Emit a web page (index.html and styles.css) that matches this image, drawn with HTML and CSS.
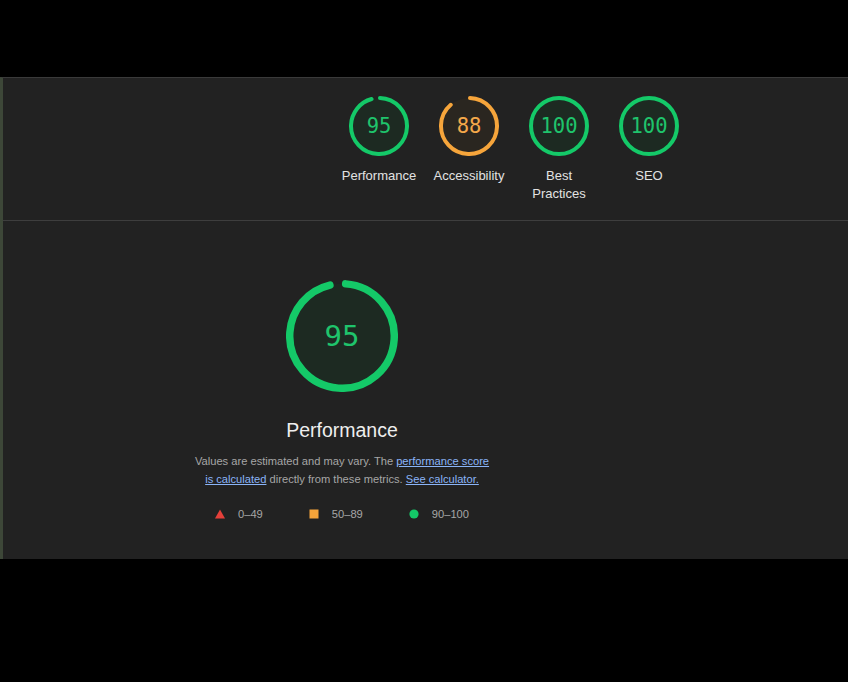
FILE: index.html
```html
<!DOCTYPE html>
<html lang="en">
<head>
<meta charset="utf-8">
<title>Lighthouse report</title>
<link rel="stylesheet" href="styles.css">
</head>
<body>
<div class="topbar"></div>
<main class="panel">
  <section class="summary">
    <div class="gauge-item">
      <svg class="gauge gauge-sm pass" viewBox="0 0 120 120">
        <circle class="g-base" cx="60" cy="60" r="56"></circle>
        <circle class="g-arc" cx="60" cy="60" r="56" stroke-dasharray="334.27 351.86" transform="rotate(-88 60 60)"></circle>
        <text class="g-num" x="60" y="60">95</text>
      </svg>
      <div class="gauge-label">Performance</div>
    </div>
    <div class="gauge-item">
      <svg class="gauge gauge-sm avg" viewBox="0 0 120 120">
        <circle class="g-base" cx="60" cy="60" r="56"></circle>
        <circle class="g-arc" cx="60" cy="60" r="56" stroke-dasharray="309.64 351.86" transform="rotate(-88 60 60)"></circle>
        <text class="g-num" x="60" y="60">88</text>
      </svg>
      <div class="gauge-label">Accessibility</div>
    </div>
    <div class="gauge-item">
      <svg class="gauge gauge-sm pass" viewBox="0 0 120 120">
        <circle class="g-base" cx="60" cy="60" r="56"></circle>
        <circle class="g-arc" cx="60" cy="60" r="56"></circle>
        <text class="g-num" x="60" y="60">100</text>
      </svg>
      <div class="gauge-label">Best<br>Practices</div>
    </div>
    <div class="gauge-item">
      <svg class="gauge gauge-sm pass" viewBox="0 0 120 120">
        <circle class="g-base" cx="60" cy="60" r="56"></circle>
        <circle class="g-arc" cx="60" cy="60" r="56"></circle>
        <text class="g-num" x="60" y="60">100</text>
      </svg>
      <div class="gauge-label">SEO</div>
    </div>
  </section>
  <section class="detail">
    <div class="detail-col">
      <svg class="gauge gauge-lg pass" viewBox="0 0 120 120">
        <circle class="g-base" cx="60" cy="60" r="56"></circle>
        <circle class="g-arc" cx="60" cy="60" r="56" stroke-dasharray="334.27 351.86" transform="rotate(-86 60 60)"></circle>
        <text class="g-num" x="60" y="60">95</text>
      </svg>
      <h2 class="title">Performance</h2>
      <p class="desc">Values are estimated and may vary. The <a href="#">performance score</a><br><a href="#">is calculated</a> directly from these metrics. <a href="#">See calculator.</a></p>
      <div class="legend">
        <span class="legend-item"><svg class="shape" viewBox="0 0 10 10"><polygon points="5,0.5 10,9.5 0,9.5" fill="#e5403a"/></svg>0–49</span>
        <span class="legend-item"><svg class="shape" viewBox="0 0 10 10"><rect x="0.5" y="0.5" width="9" height="9" fill="#f5a43a"/></svg>50–89</span>
        <span class="legend-item"><svg class="shape" viewBox="0 0 10 10"><circle cx="5" cy="5" r="4.6" fill="#14c968"/></svg>90–100</span>
      </div>
    </div>
  </section>
</main>
<div class="bottom"></div>
</body>
</html>
```
FILE: styles.css
```css
html, body {
  margin: 0;
  padding: 0;
  background: #000;
  font-family: "Liberation Sans", Arial, sans-serif;
}
.topbar {
  height: 77px;
  background: #000;
}
.panel {
  background: #222222;
  border-top: 1px solid #3a3a3a;
  border-left: 3px solid #3d4738;
  height: 482px;
  box-sizing: border-box;
}
.summary {
  display: flex;
  padding: 18px 0 0 331px;
  height: 143px;
  box-sizing: border-box;
  border-bottom: 1px solid #3e3e3e;
}
.gauge-item {
  width: 90px;
  display: flex;
  flex-direction: column;
  align-items: center;
}
.gauge {
  display: block;
}
.gauge-sm {
  width: 60px;
  height: 60px;
}
.gauge-lg {
  width: 112px;
  height: 112px;
}
.g-base {
  stroke: none;
}
.g-arc {
  fill: none;
  stroke-width: 8;
  stroke-linecap: round;
}
.g-num {
  font-family: "DejaVu Sans Mono", "Liberation Mono", monospace;
  font-size: 41px;
  text-anchor: middle;
  dominant-baseline: central;
}
.gauge-lg .g-num {
  font-size: 31px;
}
.pass .g-base { fill: #1d2a22; }
.pass .g-arc { stroke: #14c968; }
.pass .g-num { fill: #1fc46c; }
.avg .g-base { fill: #2a2620; }
.avg .g-arc { stroke: #f6a53b; }
.avg .g-num { fill: #f4a84a; }
.gauge-label {
  margin-top: 11px;
  font-size: 13px;
  line-height: 18px;
  color: #e2e2e2;
  text-align: center;
}
.detail {
  padding-top: 59px;
}
.detail-col {
  width: 310px;
  margin-left: 184px;
  display: flex;
  flex-direction: column;
  align-items: center;
  text-align: center;
}
.title {
  margin: 26px 0 0;
  font-size: 19.5px;
  font-weight: normal;
  line-height: 24px;
  color: #eeeeee;
}
.desc {
  width: 298px;
  margin: 10px 0 0;
  font-size: 11.15px;
  line-height: 18px;
  color: #a6a6a6;
}
.desc a {
  color: #8ab4f8;
  text-decoration: underline;
}
.legend {
  display: flex;
  gap: 46px;
  margin-top: 18px;
  font-size: 11.15px;
  line-height: 16px;
  color: #a6a6a6;
}
.legend-item {
  display: flex;
  align-items: center;
  gap: 13px;
}
.shape {
  width: 10px;
  height: 10px;
  display: block;
}
.bottom {
  height: 123px;
  background: #000;
}
```
